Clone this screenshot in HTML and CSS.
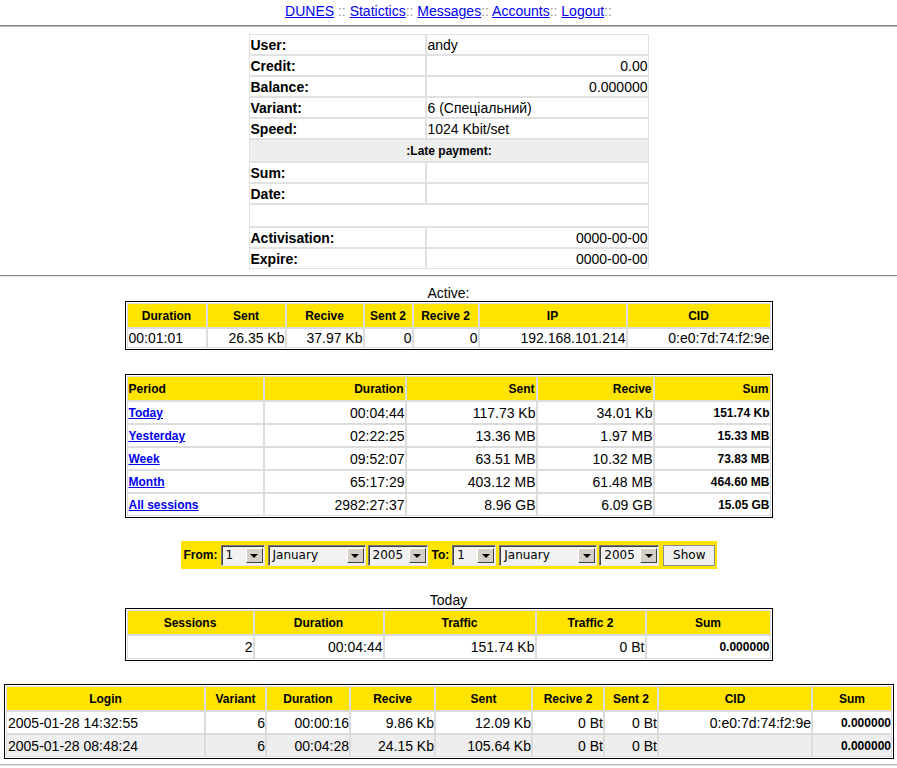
FILE: index.html
```html
<!DOCTYPE html>
<html>
<head>
<meta charset="utf-8">
<title>Stats</title>
<link rel="stylesheet" href="styles.css">
</head>
<body>
<div class="nav">
  <a href="#">DUNES</a><span class="sep"> :: </span><a href="#">Statictics</a><span class="sep">:: </span><a href="#">Messages</a><span class="sep">:: </span><a href="#">Accounts</a><span class="sep">:: </span><a href="#">Logout</a><span class="sep">::</span>
</div>
<div class="rule"></div>

<table class="info">
  <colgroup><col class="c-label"><col class="c-value"></colgroup>
  <tr><td class="lbl">User:</td><td>andy</td></tr>
  <tr><td class="lbl">Credit:</td><td class="r">0.00</td></tr>
  <tr><td class="lbl">Balance:</td><td class="r">0.000000</td></tr>
  <tr><td class="lbl">Variant:</td><td>6 (Спеціальний)</td></tr>
  <tr><td class="lbl">Speed:</td><td>1024 Kbit/set</td></tr>
  <tr class="tall"><td colspan="2" class="late">:Late payment:</td></tr>
  <tr><td class="lbl">Sum:</td><td></td></tr>
  <tr><td class="lbl">Date:</td><td></td></tr>
  <tr class="tall"><td colspan="2"></td></tr>
  <tr><td class="lbl">Activisation:</td><td class="r">0000-00-00</td></tr>
  <tr><td class="lbl">Expire:</td><td class="r">0000-00-00</td></tr>
</table>
<div class="rule rule-2"></div>

<div class="caption cap-active">Active:</div>
<div class="box box-mid">
  <table class="grid">
    <colgroup><col style="width:80px"><col style="width:79px"><col style="width:78px"><col style="width:49px"><col style="width:66px"><col style="width:148px"><col style="width:144px"></colgroup>
    <tr class="head"><td>Duration</td><td>Sent</td><td>Recive</td><td>Sent 2</td><td>Recive 2</td><td>IP</td><td>CID</td></tr>
    <tr class="row-s"><td>00:01:01</td><td class="r">26.35 Kb</td><td class="r">37.97 Kb</td><td class="r">0</td><td class="r">0</td><td class="r">192.168.101.214</td><td class="r">0:e0:7d:74:f2:9e</td></tr>
  </table>
</div>

<div class="box box-mid box-period">
  <table class="grid">
    <colgroup><col style="width:137px"><col style="width:142px"><col style="width:131px"><col style="width:117px"><col style="width:117px"></colgroup>
    <tr class="head head-r"><td class="l">Period</td><td>Duration</td><td>Sent</td><td>Recive</td><td>Sum</td></tr>
    <tr class="row"><td><a class="plink" href="#">Today</a></td><td class="r">00:04:44</td><td class="r">117.73 Kb</td><td class="r">34.01 Kb</td><td class="r sum">151.74 Kb</td></tr>
    <tr class="row"><td><a class="plink" href="#">Yesterday</a></td><td class="r">02:22:25</td><td class="r">13.36 MB</td><td class="r">1.97 MB</td><td class="r sum">15.33 MB</td></tr>
    <tr class="row"><td><a class="plink" href="#">Week</a></td><td class="r">09:52:07</td><td class="r">63.51 MB</td><td class="r">10.32 MB</td><td class="r sum">73.83 MB</td></tr>
    <tr class="row"><td><a class="plink" href="#">Month</a></td><td class="r">65:17:29</td><td class="r">403.12 MB</td><td class="r">61.48 MB</td><td class="r sum">464.60 MB</td></tr>
    <tr class="row"><td><a class="plink" href="#">All sessions</a></td><td class="r">2982:27:37</td><td class="r">8.96 GB</td><td class="r">6.09 GB</td><td class="r sum">15.05 GB</td></tr>
  </table>
</div>

<div class="dates">
  <span class="dlabel">From:</span>
  <span class="sel sel-day"><span class="val">1</span><span class="arr"></span></span>
  <span class="sel sel-month"><span class="val">January</span><span class="arr"></span></span>
  <span class="sel sel-year"><span class="val">2005</span><span class="arr"></span></span>
  <span class="dlabel dlabel-to">To:</span>
  <span class="sel sel-day"><span class="val">1</span><span class="arr"></span></span>
  <span class="sel sel-month"><span class="val">January</span><span class="arr"></span></span>
  <span class="sel sel-year"><span class="val">2005</span><span class="arr"></span></span>
  <span class="btn">Show</span>
</div>

<div class="caption cap-today">Today</div>
<div class="box box-mid box-today">
  <table class="grid">
    <colgroup><col style="width:127px"><col style="width:130px"><col style="width:152px"><col style="width:110px"><col style="width:125px"></colgroup>
    <tr class="head"><td>Sessions</td><td>Duration</td><td>Traffic</td><td>Traffic 2</td><td>Sum</td></tr>
    <tr class="row"><td class="r">2</td><td class="r">00:04:44</td><td class="r">151.74 Kb</td><td class="r">0 Bt</td><td class="r sum">0.000000</td></tr>
  </table>
</div>

<div class="box box-wide">
  <table class="grid">
    <colgroup><col style="width:199px"><col style="width:61px"><col style="width:84px"><col style="width:85px"><col style="width:97px"><col style="width:72px"><col style="width:54px"><col style="width:154px"><col style="width:80px"></colgroup>
    <tr class="head"><td>Login</td><td>Variant</td><td>Duration</td><td>Recive</td><td>Sent</td><td>Recive 2</td><td>Sent 2</td><td>CID</td><td>Sum</td></tr>
    <tr class="row"><td>2005-01-28 14:32:55</td><td class="r">6</td><td class="r">00:00:16</td><td class="r">9.86 Kb</td><td class="r">12.09 Kb</td><td class="r">0 Bt</td><td class="r">0 Bt</td><td class="r">0:e0:7d:74:f2:9e</td><td class="r sum">0.000000</td></tr>
    <tr class="row alt"><td>2005-01-28 08:48:24</td><td class="r">6</td><td class="r">00:04:28</td><td class="r">24.15 Kb</td><td class="r">105.64 Kb</td><td class="r">0 Bt</td><td class="r">0 Bt</td><td class="r"></td><td class="r sum">0.000000</td></tr>
  </table>
</div>
<div class="rule rule-3"></div>
</body>
</html>
```

FILE: styles.css
```css
html, body {
  margin: 0;
  padding: 0;
  background: #fff;
}
body {
  font-family: "Liberation Sans", Arial, sans-serif;
  font-size: 14px;
  color: #000;
}
a {
  color: #0000ee;
}
.nav {
  height: 25px;
  box-sizing: border-box;
  padding-top: 3px;
  line-height: 16px;
  text-align: center;
}
.sep {
  color: #9a9a9a;
}
.rule {
  height: 0;
  border-top: 1px solid #808080;
  border-bottom: 1px solid #bdbdbd;
}
.rule-2 {
  margin-top: 6px;
  border-bottom: 1px solid #e6e6e6;
}
.rule-3 {
  margin-top: 5px;
  border-top: 1px solid #bbbbbb;
  border-bottom: 1px solid #e0e0e0;
}

/* user info table */
.info {
  width: 400px;
  margin: 7px auto 0;
  border-collapse: separate;
  border-spacing: 0;
  table-layout: fixed;
}
.c-label { width: 177px; }
.info td {
  height: 21px;
  box-sizing: border-box;
  border: 1px solid #e1e1e1;
  padding: 0 0 0 1px;
  line-height: 16px;
  vertical-align: middle;
}
.info tr.tall td {
  height: 23px;
}
.info td.lbl {
  font-weight: bold;
}
.info td.r {
  text-align: right;
  padding: 0;
}
.info td.late {
  background: #eeeeee;
  text-align: center;
  font-weight: bold;
  font-size: 12px;
}

/* captions */
.caption {
  text-align: center;
  line-height: 16px;
}
.cap-active { margin-top: 8px; }
.cap-today { margin-top: 23px; }

/* grid boxes */
.box {
  border: 1px solid #000;
  padding: 1px;
  box-sizing: border-box;
}
.box-mid {
  width: 648px;
  margin-left: auto;
  margin-right: auto;
}
.box-period {
  margin-top: 24px;
}
.box-wide {
  width: 890px;
  margin: 23px 0 0 4px;
}
.grid {
  width: 100%;
  border-collapse: separate;
  border-spacing: 0;
  table-layout: fixed;
}
.grid td {
  border: 1px solid #dcdcdc;
  padding: 0 1px 0 1px;
  box-sizing: border-box;
  line-height: 16px;
  vertical-align: middle;
  white-space: nowrap;
  overflow: hidden;
}
.grid tr.head td {
  height: 25px;
  background: #ffe400;
  font-weight: bold;
  font-size: 12px;
  text-align: center;
}
.grid tr.head-r td {
  text-align: right;
}
.grid tr.head-r td.l {
  text-align: left;
}
.grid tr.row td {
  height: 23px;
}
.box-today .grid tr.row td {
  height: 24px;
}
.grid tr.row-s td {
  height: 20px;
}
.grid tr.alt td {
  background: #eeeeee;
}
.grid td.r {
  text-align: right;
  padding-left: 0;
  padding-right: 0;
}
.grid td.sum {
  font-weight: bold;
  font-size: 12px;
}
.plink {
  font-weight: bold;
  font-size: 12px;
  color: #0000ee;
}

/* date form */
.dates {
  width: 536px;
  height: 28px;
  margin: 23px auto 0;
  box-sizing: border-box;
  background: #ffe400;
  display: flex;
  align-items: center;
  padding-left: 3px;
}
.dlabel {
  font-weight: bold;
  font-size: 12px;
  margin-right: 3px;
}
.dlabel-to {
  margin-left: 4px;
}
.sel {
  display: flex;
  align-items: center;
  height: 21px;
  box-sizing: border-box;
  border: 1px solid;
  border-color: #7a7a7a #e8e8e8 #e8e8e8 #7a7a7a;
  box-shadow: inset 1px 1px 0 #404040;
  background: #f2f2f2;
  font-family: "DejaVu Sans", Verdana, sans-serif;
  font-size: 12px;
  margin-right: 3px;
}
.sel-day { width: 44px; }
.sel-month { width: 98px; margin-right: 2px; }
.sel-year { width: 60px; margin-right: 0; }
.val {
  padding-left: 4px;
  flex: 1;
  line-height: 15px;
}
.arr {
  width: 17px;
  height: 15px;
  margin-right: 1px;
  margin-top: 1px;
  box-sizing: border-box;
  background: #d4d0c8;
  border: 1px solid;
  border-color: #ffffff #404040 #404040 #ffffff;
  display: flex;
  align-items: center;
  justify-content: center;
}
.arr::after {
  content: "";
  width: 0;
  height: 0;
  border-left: 4px solid transparent;
  border-right: 4px solid transparent;
  border-top: 4px solid #000;
}
.btn {
  margin-left: 4px;
  width: 52px;
  height: 21px;
  box-sizing: border-box;
  border: 1px solid #8c8c8c;
  background: #efefef;
  font-family: "DejaVu Sans", Verdana, sans-serif;
  font-size: 12px;
  display: flex;
  align-items: center;
  justify-content: center;
}
```
